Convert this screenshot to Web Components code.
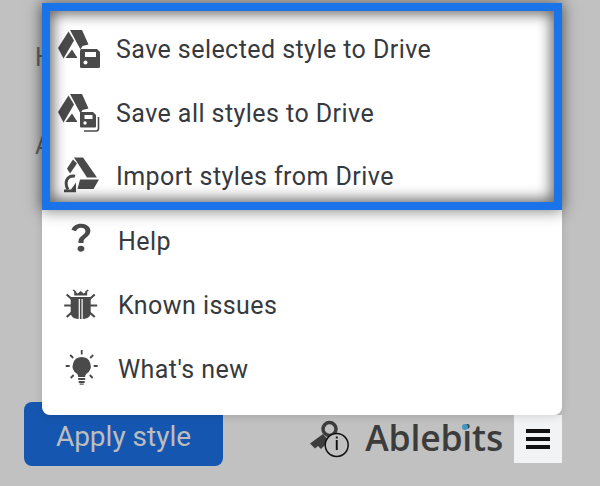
<!DOCTYPE html>
<html>
<head>
<meta charset="utf-8">
<style>
  html, body { margin: 0; padding: 0; height: 100%; background: #c1c1c1; overflow: hidden; }
  body { font-family: Roboto, "Liberation Sans", sans-serif; }
</style>
</head>
<body>
<style-sidebar>
  <menu-item slot="menu" style="height:63.5px;margin-top:1px">
    <svg slot="icon" width="44" height="40" viewBox="0 1 44 40" fill="#4a4a4a">
      <path d="M14 1h12l6.500 14.500-6 1.500-2 3.500z"/><path d="M12.500 2.500L2 19l5.500 10.500L18 11.500z"/><path d="M16 20.500l5.500 8.500H9.500z"/>
      <path d="M25 20h16l3 3v14.500a1.500 1.500 0 0 1-1.500 1.500h-17a1.500 1.500 0 0 1-1.500-1.500V21.500z"/><rect x="29" y="23" width="11" height="5" fill="#fff"/><circle cx="29.500" cy="33.500" r="2" fill="#fff"/>
    </svg>
    Save selected style to Drive
  </menu-item>
  <menu-item slot="menu" style="height:63.5px">
    <svg slot="icon" width="44" height="40" viewBox="0 0 44 40" fill="#4a4a4a">
      <path d="M14 1h12l6.500 14.500-6 1.500-2 3.500z"/><path d="M12.500 2.500L2 19l5.500 10.500L18 11.500z"/><path d="M16 20.500l5.500 8.500H9.500z"/>
      <path d="M25 19h12l3 3v11.500a1 1 0 0 1-1 1H25a1 1 0 0 1-1-1V20z"/><rect x="28.500" y="22" width="8" height="4" fill="#fff"/><circle cx="29" cy="30" r="1.700" fill="#fff"/>
      <path d="M42.500 24v11.500a2.500 2.500 0 0 1-2.500 2.500H28" fill="none" stroke="#4a4a4a" stroke-width="1.600"/>
    </svg>
    Save all styles to Drive
  </menu-item>
  <menu-item slot="menu" style="height:63.5px;margin-bottom:0.5px">
    <svg slot="icon" width="44" height="40" viewBox="0 0.500 44 40" fill="#4a4a4a">
      <path d="M18 1h9l14 20H31z"/><path d="M17 3l-6 9 3 5 7-10z"/><path d="M24 23h19l-5.500 9.500H21.500z"/>
      <path d="M19 19.700a7.500 7.500 0 0 0-7 1.800c-2.500 2.700-2.500 8 0 11.500" fill="none" stroke="#4a4a4a" stroke-width="3"/>
      <path d="M8 33h7l5-7v9.700H8z"/>
    </svg>
    Import styles from Drive
  </menu-item>
  <menu-item slot="menu" offset="2">
    <svg slot="icon" width="44" height="40" viewBox="0 0 44 40" fill="#4a4a4a">
      <g transform="translate(4.200,-1.600) scale(1.730,1.470)"><path d="M11.070 12.850c.77-1.390 2.250-2.210 3.110-3.440.91-1.290.4-3.700-2.180-3.700-1.690 0-2.520 1.280-2.870 2.340L6.540 6.960C7.250 4.830 9.180 3 11.990 3c2.350 0 3.960 1.070 4.780 2.410.7 1.150 1.110 3.300.03 4.900-1.200 1.770-2.350 2.310-2.970 3.450-.25.46-.35.76-.35 2.240h-2.890c-.01-.78-.13-2.050.48-3.150zM14 20c0 1.100-.9 2-2 2s-2-.9-2-2 .9-2 2-2 2 .9 2 2z"/></g>
    </svg>
    Help
  </menu-item>
  <menu-item slot="menu" offset="2">
    <svg slot="icon" width="44" height="40" viewBox="0 0 44 40" fill="#4a4a4a">
      <g transform="translate(2.200,0)">
        <path d="M12.500 12h8v22c-5-.3-8-2.500-8-6zM20.500 12h4v2h-1.200v20h-1.600V14h-1.200zM24.500 12h8v16c0 3.500-3 5.700-8 6z"/>
        <path d="M16 10.500V6.500l3.500 2 3-2.500 3 2.500 3.500-2v4z"/>
        <path d="M8.500 9.500l5 4.500M36.500 9.500l-5 4.500M6 20.500h8M39 20.500h-8M8.500 32l5-4.500M36.500 32l-5-4.500" stroke="#4a4a4a" stroke-width="2.200" fill="none"/>
        <path d="M15 5l3 2.500M30 5l-3 2.500" stroke="#4a4a4a" stroke-width="1.600" fill="none"/>
      </g>
    </svg>
    Known issues
  </menu-item>
  <menu-item slot="menu" offset="2">
    <svg slot="icon" width="44" height="40" viewBox="0 0 44 40" fill="#4a4a4a">
      <g transform="translate(3.200,0)">
        <path d="M22.500 8a9 9 0 0 0-5 16.500c1 .8 1.500 1.800 1.500 3.500h7c0-1.700.5-2.700 1.500-3.500a9 9 0 0 0-5-16.500z"/>
        <rect x="19" y="29" width="7" height="2"/><rect x="19.500" y="32" width="6" height="2"/><rect x="20.500" y="34.500" width="4" height="1.200"/>
        <path d="M22.500 1v4.500M11 6l3 3M34 6l-3 3M6.500 17h4M34.500 17h4M11.500 29l3-3M33.500 29l-3-3" stroke="#4a4a4a" stroke-width="1.800" fill="none"/>
      </g>
    </svg>
    What's new
  </menu-item>
</style-sidebar>

<script>
class MenuItem extends HTMLElement {
  constructor() {
    super();
    this.attachShadow({ mode: 'open' });
    this.shadowRoot.innerHTML = `
      <style>
        :host {
          display: flex;
          align-items: center;
          height: 64px;
          padding-left: 14px;
          font-size: 25px;
          letter-spacing: 0.44px;
          color: #36393d;
          white-space: nowrap;
        }
        .icon { display: flex; width: 44px; height: 40px; flex: none; }
        .label { margin-left: 16px; }
      </style>
      <span class="icon"><slot name="icon"></slot></span>
      <span class="label"><slot></slot></span>
    `;
  }

  connectedCallback() {
    const offset = this.getAttribute('offset') || 0;
    this.shadowRoot.querySelector('.label').style.marginLeft = (16 + Number(offset)) + 'px';
  }
}

class AbleLogo extends HTMLElement {
  constructor() {
    super();
    this.attachShadow({ mode: 'open' });
    this.shadowRoot.innerHTML = `
      <style>
        :host { display: flex; align-items: center; color: #3c3c3c; }
        svg { display: block; flex: none; }
        .name {
          position: relative;
          margin-left: 13px;
          margin-bottom: 4px;
          font-family: "Open Sans", "Noto Sans", sans-serif;
          font-weight: 600;
          font-size: 35.500px;
          letter-spacing: -0.2px;
          line-height: 40px;
        }
        .dot {
          position: absolute;
          left: 97px;
          top: 7px;
          width: 6px;
          height: 6px;
          border-radius: 50%;
          background: #3f97c4;
        }
      </style>
      <svg width="42" height="40" viewBox="0 0 42 40">
        <circle cx="19.500" cy="10" r="6.500" fill="none" stroke="#3c3c3c" stroke-width="3.500"/>
        <path d="M0 24.500l5 5 3-2.500 3 3 8-8-6-7z" fill="#3c3c3c"/>
        <circle cx="26.700" cy="26" r="11.500" fill="#c1c1c1" stroke="#111" stroke-width="1.500"/>
        <rect x="25.800" y="21" width="1.900" height="10" fill="#111"/>
        <rect x="25.800" y="17.500" width="1.900" height="2" fill="#111"/>
      </svg>
      <span class="name">Ablebits<span class="dot"></span></span>
    `;
  }
}

class MenuButton extends HTMLElement {
  constructor() {
    super();
    this.attachShadow({ mode: 'open' });
    this.shadowRoot.innerHTML = `
      <style>
        :host {
          display: flex;
          flex-direction: column;
          gap: 4px;
          align-items: center;
          justify-content: center;
          width: 48px;
          height: 48px;
          background: #f1f3f4;
        }
        i { display: block; width: 24px; height: 4px; background: #111; }
      </style>
      <i></i><i></i><i></i>
    `;
  }
}

class StyleSidebar extends HTMLElement {
  constructor() {
    super();
    this.attachShadow({ mode: 'open' });
    this.shadowRoot.innerHTML = `
      <style>
        :host {
          display: flex;
          flex-direction: column;
          position: relative;
          height: 486px;
          box-sizing: border-box;
          overflow: hidden;
        }
        .content {
          flex: 1;
          display: flex;
          flex-direction: column;
          gap: 60px;
          padding: 44px 0 0 24px;
          font-size: 25px;
          line-height: 28px;
          color: #666;
        }
        .content div { padding-left: 11px; }
        .footer {
          display: flex;
          align-items: center;
          padding: 0 38px 20px 24px;
        }
        .apply {
          display: flex;
          align-items: center;
          justify-content: center;
          box-sizing: border-box;
          width: 199px;
          height: 64px;
          padding-top: 4px;
          border-radius: 8px;
          background: #1557b0;
          color: #bdbdbd;
          font-size: 28px;
        }
        able-logo { margin: 10px 11px 0 auto; }
        menu-button { margin-top: 10px; }
        .menu {
          position: absolute;
          left: 42px;
          top: 9px;
          width: 520px;
          height: 406px;
          box-sizing: border-box;
          padding-top: 8px;
          background: #fff;
          border-radius: 0 0 8px 8px;
          box-shadow: 0 2px 8px rgba(0, 0, 0, 0.12);
        }
        .spot {
          position: absolute;
          left: 0;
          top: -6px;
          width: 520px;
          height: 207px;
          box-sizing: border-box;
          border: 8px solid #1a73e8;
          box-shadow: 0 0 14px 1px rgba(0, 0, 0, 0.5), inset 0 0 14px 3px rgba(0, 0, 0, 0.6);
        }
      </style>
      <div class="content"><div>H</div><div>A</div></div>
      <div class="footer">
        <div class="apply">Apply style</div>
        <able-logo></able-logo>
        <menu-button></menu-button>
      </div>
      <div class="menu">
        <slot name="menu"></slot>
        <div class="spot"></div>
      </div>
    `;
  }
}

customElements.define('menu-item', MenuItem);
customElements.define('able-logo', AbleLogo);
customElements.define('menu-button', MenuButton);
customElements.define('style-sidebar', StyleSidebar);
</script>
</body>
</html>
